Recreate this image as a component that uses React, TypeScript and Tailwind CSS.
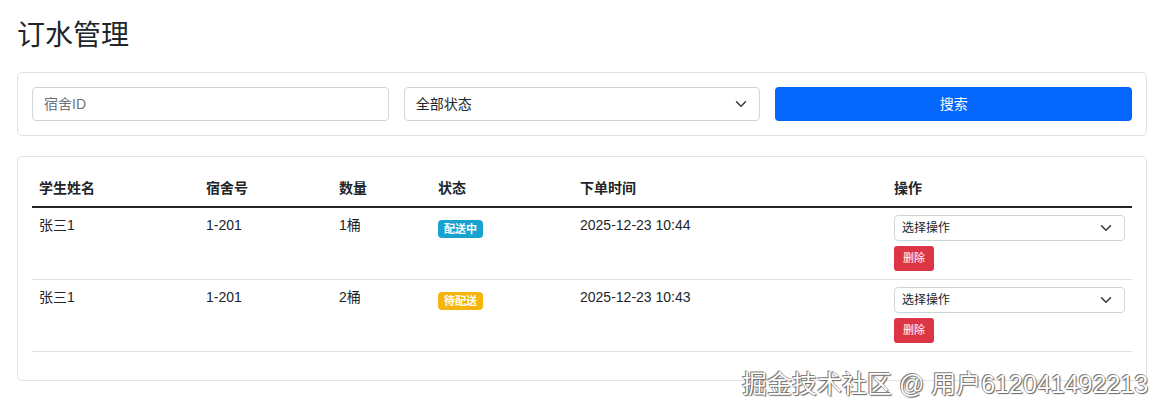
import React from "react";

const font = { fontFamily: '"Liberation Sans", "Noto Sans CJK SC", sans-serif' };

function Chevron() {
  return (
    <svg width="12" height="12" viewBox="0 0 16 16" fill="none" stroke="#343a40" strokeWidth="2" strokeLinecap="round" strokeLinejoin="round">
      <path d="M2 5l6 6 6-6" />
    </svg>
  );
}

const rows = [
  { name: "张三1", room: "1-201", qty: "1桶", status: "配送中", badge: "bg-[#17a2d0]", time: "2025-12-23 10:44" },
  { name: "张三1", room: "1-201", qty: "2桶", status: "待配送", badge: "bg-[#f5b50f]", time: "2025-12-23 10:43" },
];

export default function App() {
  return (
    <div className="relative w-[1160px] h-[414px] bg-white text-[#212529] overflow-hidden" style={font}>
      <div className="pl-[17px] pr-[13px] pt-[17px]">
        <h1 className="text-[28px] leading-[38px] font-normal text-[#212529] mb-[17px]">订水管理</h1>

        <div className="border border-[#dfe2e6] rounded-[5px] p-[14px] grid grid-cols-3 gap-[15px]">
          <div className="h-[34px] border border-[#ced4da] rounded-[4px] px-[11px] flex items-center text-[14px] text-[#6c757d]">宿舍ID</div>
          <div className="h-[34px] border border-[#ced4da] rounded-[4px] pl-[11px] pr-[12px] flex items-center justify-between text-[14px] text-[#212529]">
            <span>全部状态</span>
            <Chevron />
          </div>
          <div className="h-[34px] rounded-[4px] bg-[#0566fb] flex items-center justify-center text-[14px] text-white">搜索</div>
        </div>

        <div className="mt-[20px] border border-[#dfe2e6] rounded-[5px] px-[14px] pt-[14px] pb-[28px]">
          <table className="w-full border-collapse text-[14px] table-fixed">
            <colgroup>
              <col className="w-[167px]" />
              <col className="w-[133px]" />
              <col className="w-[99px]" />
              <col className="w-[142px]" />
              <col className="w-[314px]" />
              <col />
            </colgroup>
            <thead>
              <tr className="border-b-2 border-[#212529]">
                <th className="text-left font-bold px-[7px] h-[36px] align-middle">学生姓名</th>
                <th className="text-left font-bold px-[7px] align-middle">宿舍号</th>
                <th className="text-left font-bold px-[7px] align-middle">数量</th>
                <th className="text-left font-bold px-[7px] align-middle">状态</th>
                <th className="text-left font-bold px-[7px] align-middle">下单时间</th>
                <th className="text-left font-bold px-[7px] align-middle">操作</th>
              </tr>
            </thead>
            <tbody>
              {rows.map((r, i) => (
                <tr key={i} className="border-b border-[#dee2e6]">
                  <td className="px-[7px] pt-[7px] align-top">{r.name}</td>
                  <td className="px-[7px] pt-[7px] align-top">{r.room}</td>
                  <td className="px-[7px] pt-[7px] align-top">{r.qty}</td>
                  <td className="px-[7px] pt-[10px] align-top">
                    <span className={`inline-flex items-center h-[18px] px-[6px] rounded-[4px] text-[11px] font-bold text-white ${r.badge}`}>{r.status}</span>
                  </td>
                  <td className="px-[7px] pt-[7px] align-top">{r.time}</td>
                  <td className="px-[7px] pt-[7px] pb-[8px] align-top">
                    <div className="h-[26px] border border-[#ced4da] rounded-[4px] pl-[7px] pr-[12px] flex items-center justify-between text-[12px] text-[#212529]">
                      <span>选择操作</span>
                      <Chevron />
                    </div>
                    <div className="mt-[5px] w-[40px] h-[25px] rounded-[3px] bg-[#dc3545] text-white text-[11px] flex items-center justify-center">删除</div>
                  </td>
                </tr>
              ))}
            </tbody>
          </table>
        </div>
      </div>

      <div
        className="absolute left-[742px] top-[369px] text-[25px] leading-[30px] text-white whitespace-nowrap"
        style={{ textShadow: "0 0 1px #555, 1px 1px 1px #666, -1px -1px 0 #888" }}
      >
        掘金技术社区 @ 用户612041492213
      </div>
    </div>
  );
}
